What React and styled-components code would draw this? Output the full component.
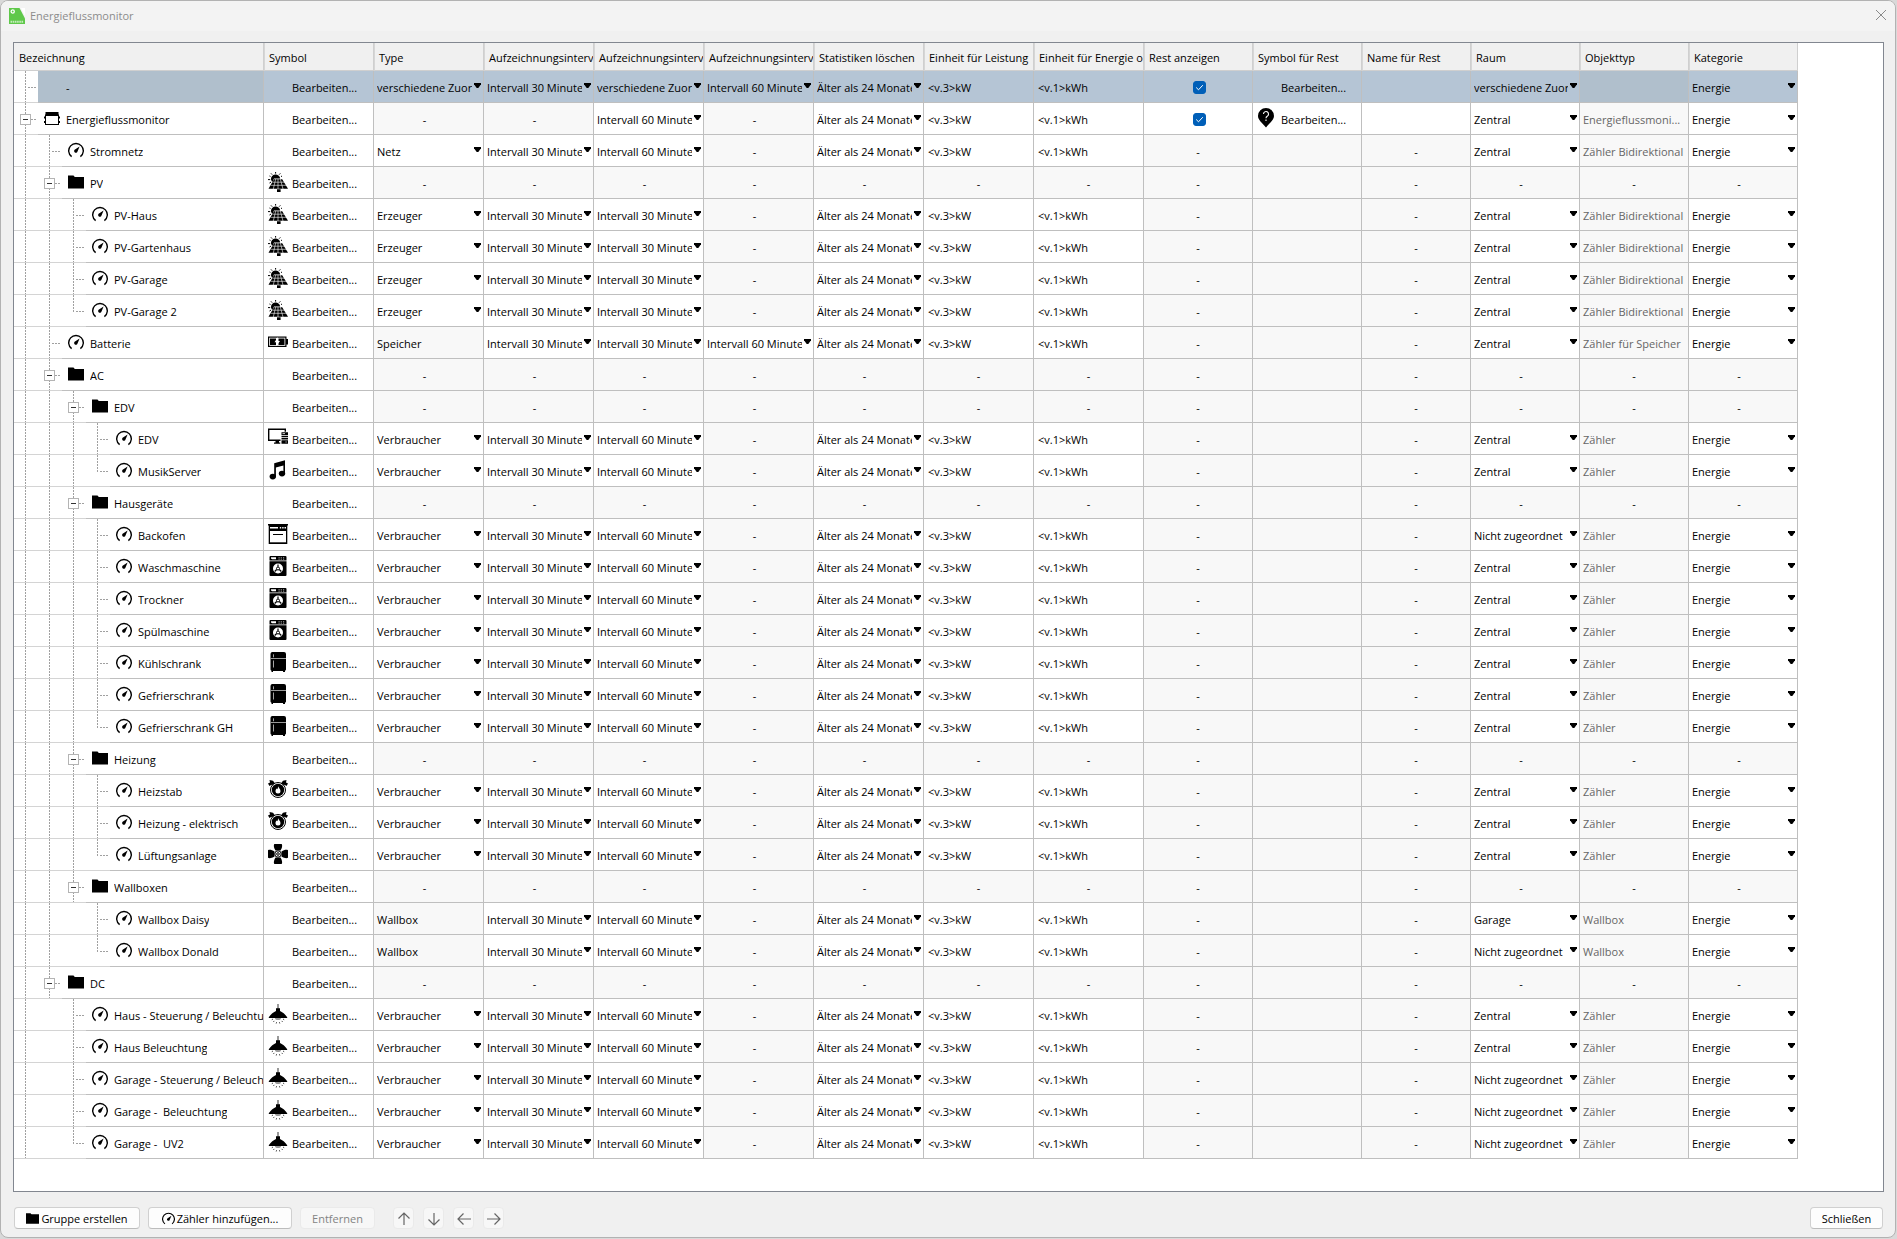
import React, { useState } from "react";
import styled, { createGlobalStyle, css } from "styled-components";

const GlobalStyle = createGlobalStyle`
  body {
    margin: 0;
    background: #d9d9d9;
    font-family: "Open Sans", "Noto Sans", sans-serif;
    font-size: 11px;
    line-height: 16px;
    color: #000;
  }
  button, input, select {
    font: inherit;
    color: inherit;
  }
`;

const Window = styled.div`
  display: flex;
  flex-direction: column;
  box-sizing: border-box;
  min-height: calc(100vh - 1px);
  margin: 0 1px 1px 0;
  border: 1px solid #b2b2b2;
  border-radius: 8px;
  background: #f0f0f0;
  overflow: hidden;
`;

const TitleBar = styled.header`
  display: flex;
  align-items: center;
  gap: 5px;
  height: 30px;
  padding: 0 8px;
  background: #f3f3f3;
`;

const Title = styled.h1`
  flex: 1;
  margin: 0;
  font-size: 11px;
  font-weight: 400;
  color: #8c8c8c;
`;

const CloseButton = styled.button`
  display: flex;
  padding: 0 0 2px;
  border: 0;
  background: none;
  color: #8a8a8a;
`;

const Panel = styled.main`
  flex: 1;
  margin: 11px 11px 0 12px;
  border: 1px solid #828790;
  background: #fff;
  overflow: auto;
`;

const Table = styled.table`
  table-layout: fixed;
  width: 1784px;
  border-collapse: separate;
  border-spacing: 0;
`;

const Col = styled.col`
  width: ${({ $width }) => $width}px;
`;

const Th = styled.th`
  box-sizing: border-box;
  height: 28px;
  padding: 3px 0 0 5px;
  border-right: 1px solid #cfcfcf;
  border-bottom: 1px solid #cfcfcf;
  background: #f0f0f0;
  font-weight: 400;
  text-align: left;
  white-space: nowrap;
  overflow: hidden;
  & + & {
    padding-left: 4px;
    border-left: 1px solid #d6d6d6;
  }
`;

const Td = styled.td`
  box-sizing: border-box;
  height: 32px;
  padding: 0;
  border-right: 1px solid #bfbfbf;
  border-bottom: ${({ $tree }) => ($tree ? "0" : "1px solid #bfbfbf")};
  background: ${({ $disabled }) => ($disabled ? "#f8f8f8" : "#fff")};
  white-space: pre;
  overflow: hidden;
  ${({ $selected, $disabled }) =>
    $selected &&
    css`
      background: ${$disabled ? "#b0bfcc" : "#b5c5d5"};
    `}
`;

const CellText = styled.div`
  padding: 2px 0 0 ${({ $unit }) => ($unit ? "4px" : "3px")};
  color: ${({ $muted }) => ($muted ? "#666" : "inherit")};
`;

const Dash = styled.div`
  padding-top: 2px;
  padding-right: ${({ $list }) => ($list ? "8px" : "0")};
  text-align: center;
`;

const TreeRow = styled.div`
  display: flex;
  height: 32px;
`;

const dotsDown = "repeating-linear-gradient(to bottom, #a0a0a0 0 2px, transparent 2px 3px)";
const dotsRight = "repeating-linear-gradient(to right, #a0a0a0 0 2px, transparent 2px 3px)";

const Guide = styled.span`
  display: flex;
  align-items: center;
  flex: none;
  box-sizing: border-box;
  width: 24px;
  height: 32px;
  padding: 2px 0 0 6px;
  border-bottom: 1px solid #d4d4d4;
  background-color: #fff;
  background-repeat: no-repeat;
  background-image: ${({ $line, $branch }) =>
    [$line && dotsDown, $branch && dotsRight].filter(Boolean).join(", ") || "none"};
  background-position: ${({ $line }) => ($line ? "11px 0, " : "")}14px 16px;
  background-size: ${({ $line }) =>
    $line ? `1px ${$line === "half" ? "17px" : "100%"}, ` : ""}9px 1px;
`;

const Expander = styled.button`
  display: block;
  width: 11px;
  height: 11px;
  padding: 0;
  border: 1px solid #b4b4b4;
  background: linear-gradient(#333, #333) center / 5px 1px no-repeat #fff;
`;

const TreeItem = styled.div`
  display: flex;
  align-items: center;
  flex: 1;
  gap: 6px;
  min-width: 0;
  padding-left: 6px;
  border-bottom: 1px solid #bfbfbf;
  background: ${({ $selected }) => ($selected ? "#b0bfcc" : "#fff")};
  overflow: hidden;
`;

const TreeLabel = styled.span`
  padding-top: 2px;
  overflow: hidden;
`;

const TreeIcon = styled.span`
  display: flex;
  flex: none;
  width: 16px;
  margin-bottom: 1px;
`;

const SymbolCell = styled.div`
  display: flex;
  align-items: center;
  gap: 4px;
  height: 31px;
  padding-left: 4px;
`;

const SymbolSlot = styled.span`
  display: flex;
  flex: none;
  width: 20px;
  height: 20px;
  margin-bottom: 1px;
`;

const EditButton = styled.button`
  padding: 2px 0 0;
  border: 0;
  background: none;
`;

const SelectBox = styled.div`
  display: grid;
  align-items: center;
  height: 31px;
  > * {
    grid-area: 1 / 1;
  }
`;

const Select = styled.select`
  appearance: none;
  width: 100%;
  height: 31px;
  padding: 2px 11px 0 3px;
  border: 0;
  border-radius: 0;
  outline: 0;
  background: none;
`;

const SelectArrow = styled.svg`
  justify-self: end;
  margin: 0 2px 2px 0;
  pointer-events: none;
`;

const CheckBox = styled.div`
  display: grid;
  place-items: center;
  padding: 2px 0 0 2px;
  > * {
    grid-area: 1 / 1;
  }
  > svg {
    pointer-events: none;
  }
`;

const Check = styled.input`
  appearance: none;
  width: 13px;
  height: 13px;
  margin: 0;
  border: 1px solid #005fb8;
  border-radius: 3px;
  background: ${({ checked }) => (checked ? "#005fb8" : "#fff")};
`;

const NameInput = styled.input`
  display: block;
  box-sizing: border-box;
  width: 100%;
  height: 31px;
  padding: 2px 3px 0;
  border: 0;
  outline: 0;
  background: none;
`;

const Footer = styled.footer`
  display: flex;
  gap: 8px;
  padding: 15px 12px 8px 13px;
`;

const Button = styled.button`
  display: flex;
  align-items: center;
  justify-content: center;
  gap: 2px;
  box-sizing: border-box;
  min-width: ${({ $width }) => $width}px;
  height: 22px;
  padding: 1px 0 0;
  border: 1px solid #d0d0d0;
  border-bottom-color: #bcbcbc;
  border-radius: 4px;
  background: #fdfdfd;
  white-space: nowrap;
  &:disabled {
    border-color: #eaeaea;
    background: #f7f7f7;
    color: #838383;
  }
`;

const ArrowGroup = styled.div`
  display: flex;
  gap: 9px;
  margin: 0 auto 0 10px;
`;

const MeterIcon = ({ size = 16 }) => (
  <svg width={size} height={size} viewBox="0 0 16 16" fill="none">
    <path d="M3.6 14.6A7.3 7.3 0 1 1 12.4 14.6" stroke="#000" strokeWidth="1.4" />
    <path d="M11.6 4.6 9.5 9.4A1.7 1.7 0 1 1 7 7.6Z" fill="#000" />
  </svg>
);

const FolderIcon = ({ size = 16 }) => (
  <svg width={size} height={size} viewBox="0 0 16 16">
    <path d="M0 1.5h5.5l1.3 1.4H16V14.5H0Z" />
  </svg>
);

const MonitorIcon = () => (
  <svg width="16" height="16" viewBox="0 0 16 16">
    <path d="M1.500 2h13v2.500h.500V15H1V4.500h.500Z" />
    <path d="M2 6h12v8H2Z" fill="#fff" />
    <path d="M0 6.500h1v2H0zM15 6.500h1v2h-1zM0 11h1v2H0zM15 11h1v2h-1z" />
  </svg>
);

const SolarIcon = () => (
  <svg width="20" height="20" viewBox="0 0 20 20">
    <path d="M3 7.600a4.600 4.600 0 0 1 9.200-1.100H6L4.400 10A4.600 4.600 0 0 1 3 7.600Z" />
    <path
      d="M7.600 0v1.600M3 1.400l1.100 1.200M12.300 1.400l-1.100 1.200M0 7.600h2.200M1.500 4l1 .4M1.500 11l1.600-1M13 4.500l1-.4"
      stroke="#000"
    />
    <path d="M6 7.200H14.200L20 16.700H.5Z" />
    <path
      d="M4.500 10.200H17M2.700 13.300H19M10 7v10M7.700 7 5.300 17M12.300 7 15 17"
      stroke="#fff"
      strokeWidth=".6"
    />
    <path d="M9 17.300h3.600V20H9Z" />
  </svg>
);

const BatteryIcon = () => (
  <svg width="20" height="20" viewBox="0 0 20 20">
    <path d="M0 4.500h18.500V7H20v5.500h-1.500v2.500H0Z" />
    <path d="M1.200 5.700h16.100v8.100H1.200Z" fill="#fff" />
    <path d="M2 6.500h6v6.500H2zM10.500 6.500h6v6.500h-6z" />
    <path d="M10 5 6.500 10.300h2.300L7.800 14.500l4.200-5.600H9.800Z" fill="#fff" />
  </svg>
);

const ComputerIcon = () => (
  <svg width="20" height="20" viewBox="0 0 20 20">
    <path d="M.7 1.200h16.600v11.100H.7Z" fill="#fff" stroke="#000" strokeWidth="1.400" />
    <path d="M7.500 12.500h3.500v2H7.500zM6 14.500h6.500v1.300H6z" />
    <path d="M12.500 3.700H20v12.500h-7.500Z" fill="#fff" />
    <path d="M13.500 4.200H20v2.800h-6.500zM13.500 7.700H20v1.500h-6.500zM13.500 10H20v1.500h-6.500zM13.500 12.300H20v3.500h-6.500z" />
    <path d="M14.500 5.600h2.500M17.500 14h1.200" stroke="#fff" strokeWidth=".8" />
  </svg>
);

const MusicIcon = () => (
  <svg width="20" height="20" viewBox="0 0 20 20">
    <path d="M6.200 3.200 17 .2v13.200h-1.600V5.500L7.900 7.600v8.900H6.200Z" />
    <ellipse cx="4.800" cy="16.600" rx="3.200" ry="2.800" />
    <ellipse cx="14" cy="13.600" rx="3.200" ry="2.800" />
  </svg>
);

const OvenIcon = () => (
  <svg width="20" height="20" viewBox="0 0 20 20">
    <path d="M0 0h20v1.500h-.7V20H.7V1.500H0Z" />
    <path d="M2 7h16v11.300H2Z" fill="#fff" />
    <path d="M2 3h8v1.500H2zM11.800 3h1.400v1.500h-1.400zM14.200 3h1.400v1.500h-1.400zM16.500 3H18v1.500h-1.500z" fill="#fff" />
    <path d="M5 10.500h10" stroke="#000" />
  </svg>
);

const WasherIcon = () => (
  <svg width="20" height="20" viewBox="0 0 20 20">
    <path d="M2.500 0h15a1 1 0 0 1 1 1v3.500h-17V1a1 1 0 0 1 1-1ZM1.500 5.300h17V19a1 1 0 0 1-1 1h-15a1 1 0 0 1-1-1Z" />
    <path d="M3 1.300h5v2H4.200L3 2.600Z" fill="#fff" />
    <path d="M10.500 1.700h1.200M12.700 1.700h1.200M15 1.700h1.200M10.500 3.200h1.200M12.700 3.200h1.200M15 3.200h1.200" stroke="#fff" strokeWidth=".6" />
    <circle cx="10" cy="12.500" r="5" fill="#fff" />
    <circle cx="10" cy="12.500" r="1.500" fill="none" stroke="#000" />
    <path d="M10 8.500v2.200M8.700 13.500l-2 2M11.300 13.500l2 2" stroke="#000" strokeWidth="1.200" />
  </svg>
);

const FridgeIcon = () => (
  <svg width="20" height="20" viewBox="0 0 20 20">
    <path d="M4 0h12a2 2 0 0 1 2 2v15.500a1.500 1.500 0 0 1-1 1.300V20h-2v-.9H5V20H3.500v-1.200a1.500 1.500 0 0 1-1-1.300V2A2 2 0 0 1 4 0Z" />
    <path d="M2.500 6.500H18" stroke="#999" />
    <path d="M5.500 2.300v3M5.500 8.500v7" stroke="#ccc" strokeWidth=".8" />
  </svg>
);

const HeaterIcon = () => (
  <svg width="20" height="20" viewBox="0 0 20 20">
    <path d="M1.500 0 5 .8 7.300 3.800 4.800 6.200 3.400 4.700 1.500 6 0 3.500 2 2.400ZM18.500 0 15 .8l-2.300 3 2.500 2.400 1.400-1.500L18.500 6 20 3.500 18 2.400Z" />
    <circle cx="10" cy="10" r="7.500" fill="#fff" stroke="#000" />
    <circle cx="10" cy="10" r="6.200" />
    <path d="M10.200 6.300c.2 1.600 2.300 2.600 2.300 4.700a2.500 2.500 0 0 1-5 0c0-1.200.7-1.800 1.100-2.500l.8.700c.5-.7.600-1.800.8-2.900Z" fill="#fff" />
  </svg>
);

const FanIcon = () => (
  <svg width="20" height="20" viewBox="0 0 20 20">
    <path d="M6.300 0h7.400c1 1.500.3 4-1.200 6.500h-5C6 4 5.300 1.500 6.300 0ZM6.300 20h7.400c1-1.500.3-4-1.200-6.500h-5C6 16 5.300 18.500 6.300 20ZM0 6.300v7.400c1.500 1 4 .3 6.500-1.200v-5C4 6 1.500 5.300 0 6.300ZM20 6.300v7.400c-1.500 1-4 .3-6.500-1.200v-5C16 6 18.500 5.300 20 6.300Z" />
    <circle cx="10" cy="10" r="3.200" fill="#fff" stroke="#000" />
    <circle cx="10" cy="10" r="1.300" fill="none" stroke="#000" />
  </svg>
);

const LampIcon = () => (
  <svg width="20" height="20" viewBox="0 0 20 20">
    <path d="M10 0v5" stroke="#555" strokeWidth="1.200" />
    <path d="M8 4.300h4V7c2 .9 5.500 3.300 7.200 6.200V14H.8v-.8C2.500 10.300 6 7.900 8 7Z" />
    <path d="M7 14h6a3 2 0 0 1-6 0Z" fill="#999" />
    <path d="M3.800 15.700l1.200-.7M5.400 17.900l.9-1M8.200 19.500l.4-1.300M11.800 19.500l-.4-1.300M14.600 17.900l-.9-1M16.200 15.700l-1.200-.7" stroke="#444" />
  </svg>
);

const PinIcon = () => (
  <svg width="20" height="20" viewBox="0 0 20 20">
    <path d="M9 0a8 8 0 0 1 8 8c0 4-4 6.500-8 11.500C5 14.500 1 12 1 8a8 8 0 0 1 8-8Z" />
    <path d="M6.500 6a2.500 2.500 0 1 1 3.900 2.100C9.400 8.800 9 9 9 10.200M9 11.500v1.400" fill="none" stroke="#fff" strokeWidth="1.100" />
  </svg>
);

const LogoIcon = () => (
  <svg width="16" height="16" viewBox="0 0 16 16">
    <path d="M0 0h10.500L16 10.500V16H0Z" fill="#5fc84a" />
    <path d="M12 0h4v8Z" fill="#fff" />
    <circle cx="3.700" cy="3.500" r="1.600" fill="none" stroke="#fff" strokeWidth="1.300" />
    <path d="M1.500 13.700h13" stroke="#c5ecbd" strokeWidth="2" strokeDasharray="1.600 .600" />
  </svg>
);

const symbols = {
  solar: SolarIcon,
  battery: BatteryIcon,
  computer: ComputerIcon,
  music: MusicIcon,
  oven: OvenIcon,
  washer: WasherIcon,
  fridge: FridgeIcon,
  heater: HeaterIcon,
  fan: FanIcon,
  lamp: LampIcon,
  pin: PinIcon,
};

const treeIcons = {
  monitor: MonitorIcon,
  folder: FolderIcon,
  meter: MeterIcon,
};

const columns = [
  { label: "Bezeichnung", width: 250 },
  { label: "Symbol", width: 110 },
  { label: "Type", width: 110 },
  { label: "Aufzeichnungsinterv", width: 110 },
  { label: "Aufzeichnungsinterv", width: 110 },
  { label: "Aufzeichnungsinterv", width: 110 },
  { label: "Statistiken löschen", width: 110 },
  { label: "Einheit für Leistung", width: 110 },
  { label: "Einheit für Energie o", width: 110 },
  { label: "Rest anzeigen", width: 109 },
  { label: "Symbol für Rest", width: 109 },
  { label: "Name für Rest", width: 109 },
  { label: "Raum", width: 109 },
  { label: "Objekttyp", width: 109 },
  { label: "Kategorie", width: 109 },
];

const MIN30 = "Intervall 30 Minuten";
const MIN60 = "Intervall 60 Minuten";
const VARIOUS = "verschiedene Zuor";

const group = (name, level, guides, symbol) => ({
  name,
  level,
  guides,
  symbol,
  icon: "folder",
  group: true,
});

const meter = (name, level, guides, symbol, rest) => ({
  name,
  level,
  guides,
  symbol,
  icon: "meter",
  type: "Verbraucher",
  power: MIN30,
  energy: MIN60,
  room: "Zentral",
  object: "Zähler",
  ...rest,
});

const producer = {
  type: "Erzeuger",
  energy: MIN30,
  object: "Zähler Bidirektional",
};
const wallbox = { type: "Wallbox", fixedType: true, object: "Wallbox" };
const noRoom = { room: "Nicht zugeordnet" };

// guides: levels left of the item that carry a line through the row
const rows = [
  {
    name: "-",
    level: 0,
    guides: [],
    selected: true,
    type: VARIOUS,
    power: MIN30,
    energy: VARIOUS,
    storage: MIN60,
    room: VARIOUS,
    object: "",
    rest: true,
  },
  {
    name: "Energieflussmonitor",
    level: 0,
    guides: [],
    icon: "monitor",
    expandable: true,
    energy: MIN60,
    room: "Zentral",
    object: "Energieflussmoni...",
    rest: true,
    restSymbol: "pin",
  },
  meter("Stromnetz", 1, [0], null, {
    type: "Netz",
    object: "Zähler Bidirektional",
  }),
  group("PV", 1, [0], "solar"),
  meter("PV-Haus", 2, [0, 1], "solar", producer),
  meter("PV-Gartenhaus", 2, [0, 1], "solar", producer),
  meter("PV-Garage", 2, [0, 1], "solar", producer),
  meter("PV-Garage 2", 2, [0, 1], "solar", { ...producer, last: true }),
  meter("Batterie", 1, [0], "battery", {
    type: "Speicher",
    fixedType: true,
    energy: MIN30,
    storage: MIN60,
    object: "Zähler für Speicher",
  }),
  group("AC", 1, [0]),
  group("EDV", 2, [0, 1]),
  meter("EDV", 3, [0, 1, 2], "computer"),
  meter("MusikServer", 3, [0, 1, 2], "music", { last: true }),
  group("Hausgeräte", 2, [0, 1]),
  meter("Backofen", 3, [0, 1, 2], "oven", noRoom),
  meter("Waschmaschine", 3, [0, 1, 2], "washer"),
  meter("Trockner", 3, [0, 1, 2], "washer"),
  meter("Spülmaschine", 3, [0, 1, 2], "washer"),
  meter("Kühlschrank", 3, [0, 1, 2], "fridge"),
  meter("Gefrierschrank", 3, [0, 1, 2], "fridge"),
  meter("Gefrierschrank GH", 3, [0, 1, 2], "fridge", { last: true }),
  group("Heizung", 2, [0, 1]),
  meter("Heizstab", 3, [0, 1, 2], "heater"),
  meter("Heizung - elektrisch", 3, [0, 1, 2], "heater"),
  meter("Lüftungsanlage", 3, [0, 1, 2], "fan", { last: true }),
  group("Wallboxen", 2, [0, 1]),
  meter("Wallbox Daisy", 3, [0, 1], null, { ...wallbox, room: "Garage" }),
  meter("Wallbox Donald", 3, [0, 1], null, { ...wallbox, ...noRoom, last: true }),
  group("DC", 1, [0]),
  meter("Haus - Steuerung / Beleuchtung", 2, [0], "lamp"),
  meter("Haus Beleuchtung", 2, [0], "lamp"),
  meter("Garage - Steuerung / Beleuchtung", 2, [0], "lamp", noRoom),
  meter("Garage -  Beleuchtung", 2, [0], "lamp", noRoom),
  meter("Garage -  UV2", 2, [0], "lamp", { ...noRoom, last: true }),
];

const TreeCell = ({ row }) => {
  const Icon = treeIcons[row.icon];
  return (
    <Td $tree>
      <TreeRow>
        {Array.from({ length: row.level }, (_, i) => (
          <Guide key={i} $line={row.guides.includes(i) && "full"} />
        ))}
        <Guide $line={row.last ? "half" : "full"} $branch>
          {(row.group || row.expandable) && (
            <Expander aria-label={`${row.name} zuklappen`} />
          )}
        </Guide>
        <TreeItem $selected={row.selected}>
          <TreeIcon>{Icon && <Icon />}</TreeIcon>
          <TreeLabel>{row.name}</TreeLabel>
        </TreeItem>
      </TreeRow>
    </Td>
  );
};

const EditCell = ({ symbol, selected }) => {
  const Icon = symbols[symbol];
  return (
    <Td $selected={selected}>
      <SymbolCell>
        <SymbolSlot>{Icon && <Icon />}</SymbolSlot>
        <EditButton>Bearbeiten...</EditButton>
      </SymbolCell>
    </Td>
  );
};

const SelectCell = ({ label, value, options, selected }) => {
  const [current, setCurrent] = useState(value);
  if (!value) {
    return (
      <Td $disabled>
        <Dash $list>-</Dash>
      </Td>
    );
  }
  return (
    <Td $selected={selected}>
      <SelectBox>
        <Select
          aria-label={label}
          value={current}
          onChange={(e) => setCurrent(e.target.value)}
        >
          {options.map((o) => (
            <option key={o}>{o}</option>
          ))}
        </Select>
        <SelectArrow width="7" height="5" viewBox="0 0 7 5">
          <path d="M0 0h7v1.200L4.300 5H2.700L0 1.200Z" />
        </SelectArrow>
      </SelectBox>
    </Td>
  );
};

const TextCell = ({ value, group, muted, unit, selected }) =>
  group ? (
    <Td $disabled>
      <Dash>-</Dash>
    </Td>
  ) : (
    <Td $disabled={muted} $selected={selected}>
      <CellText $muted={muted} $unit={unit}>
        {value}
      </CellText>
    </Td>
  );

const RestCell = ({ row }) => {
  const [checked, setChecked] = useState(true);
  if (!row.rest) {
    return (
      <Td $disabled>
        <Dash>-</Dash>
      </Td>
    );
  }
  return (
    <Td $selected={row.selected}>
      <CheckBox>
        <Check
          type="checkbox"
          aria-label="Rest anzeigen"
          checked={checked}
          onChange={() => setChecked((prev) => !prev)}
        />
        <svg width="9" height="9" viewBox="0 0 9 9" fill="none" stroke="#fff">
          <path d="M1.200 4.500 3.500 6.800 7.800 2.200" />
        </svg>
      </CheckBox>
    </Td>
  );
};

const intervals = [MIN30, MIN60, VARIOUS];

const MeterRow = ({ row }) => {
  const { selected } = row;
  return (
    <tr>
      <TreeCell row={row} />
      <EditCell symbol={row.symbol} selected={selected} />
      {row.fixedType ? (
        <Td $disabled>
          <CellText>{row.type}</CellText>
        </Td>
      ) : (
        <SelectCell
          label="Type"
          value={row.type}
          options={["Netz", "Erzeuger", "Verbraucher", VARIOUS]}
          selected={selected}
        />
      )}
      <SelectCell label="Intervall Leistung" value={row.power} options={intervals} selected={selected} />
      <SelectCell label="Intervall Energie" value={row.energy} options={intervals} selected={selected} />
      <SelectCell label="Intervall Speicher" value={row.storage} options={intervals} selected={selected} />
      <SelectCell
        label="Statistiken löschen"
        value={row.group ? null : "Älter als 24 Monate"}
        options={["Älter als 24 Monate"]}
        selected={selected}
      />
      <TextCell value="<v.3>kW" group={row.group} unit selected={selected} />
      <TextCell value="<v.1>kWh" group={row.group} unit selected={selected} />
      <RestCell row={row} />
      {row.rest ? <EditCell symbol={row.restSymbol} selected={selected} /> : <Td $disabled />}
      {row.rest ? (
        <Td $selected={selected}>
          <NameInput aria-label="Name für Rest" />
        </Td>
      ) : (
        <Td $disabled>
          <Dash>-</Dash>
        </Td>
      )}
      <SelectCell
        label="Raum"
        value={row.room}
        options={["Zentral", "Garage", "Nicht zugeordnet", VARIOUS]}
        selected={selected}
      />
      <TextCell value={row.object} group={row.group} muted selected={selected} />
      <SelectCell
        label="Kategorie"
        value={row.group ? null : "Energie"}
        options={["Energie"]}
        selected={selected}
      />
    </tr>
  );
};

const arrows = [
  { label: "Nach oben", path: "M7 13V1M1.500 6.500 7 1l5.500 5.500" },
  { label: "Nach unten", path: "M7 1v12M1.500 7.500 7 13l5.500-5.500" },
  { label: "Nach links", path: "M14 7H1M6.500 1.500 1 7l5.500 5.500" },
  { label: "Nach rechts", path: "M0 7h13M7.500 1.500 13 7l-5.500 5.500" },
];

const App = () => (
  <>
    <GlobalStyle />
    <Window>
      <TitleBar>
        <LogoIcon />
        <Title>Energieflussmonitor</Title>
        <CloseButton aria-label="Fenster schließen">
          <svg width="12" height="12" viewBox="0 0 12 12" stroke="currentColor">
            <path d="M1 1l10 10M11 1 1 11" />
          </svg>
        </CloseButton>
      </TitleBar>
      <Panel>
        <Table>
          <colgroup>
            {columns.map((c, i) => (
              <Col key={i} $width={c.width} />
            ))}
          </colgroup>
          <thead>
            <tr>
              {columns.map((c, i) => (
                <Th key={i}>{c.label}</Th>
              ))}
            </tr>
          </thead>
          <tbody>
            {rows.map((row, i) => (
              <MeterRow key={i} row={row} />
            ))}
          </tbody>
        </Table>
      </Panel>
      <Footer>
        <Button $width={126}>
          <FolderIcon size={13} />
          Gruppe erstellen
        </Button>
        <Button $width={144}>
          <MeterIcon size={13} />
          Zähler hinzufügen...
        </Button>
        <Button $width={75} disabled>
          Entfernen
        </Button>
        <ArrowGroup>
          {arrows.map((a) => (
            <Button key={a.label} $width={21} aria-label={a.label} disabled>
              <svg width="14" height="14" viewBox="0 0 14 14" fill="none" stroke="#666" strokeWidth="1.200">
                <path d={a.path} />
              </svg>
            </Button>
          ))}
        </ArrowGroup>
        <Button $width={73}>Schließen</Button>
      </Footer>
    </Window>
  </>
);

export default App;
